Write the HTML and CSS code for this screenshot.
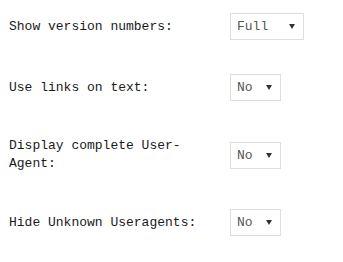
FILE: index.html
```html
<!DOCTYPE html>
<html lang="en">

<head>
  <meta charset="UTF-8" />
  <title>Settings</title>
  <link rel="stylesheet" href="styles.css">
</head>

<body>

  <form class="settings">
    <div class="row">
      <label class="label" for="versions">Show version numbers:</label>
      <div class="pick pick-wide">
        <select id="versions">
          <option>Full</option>
          <option>Short</option>
          <option>None</option>
        </select>
        <span class="arrow"></span>
      </div>
    </div>

    <div class="row">
      <label class="label" for="links">Use links on text:</label>
      <div class="pick">
        <select id="links">
          <option>No</option>
          <option>Yes</option>
        </select>
        <span class="arrow"></span>
      </div>
    </div>

    <div class="row">
      <label class="label" for="agent">Display complete User-Agent:</label>
      <div class="pick">
        <select id="agent">
          <option>No</option>
          <option>Yes</option>
        </select>
        <span class="arrow"></span>
      </div>
    </div>

    <div class="row">
      <label class="label" for="unknown">Hide Unknown Useragents:</label>
      <div class="pick">
        <select id="unknown">
          <option>No</option>
          <option>Yes</option>
        </select>
        <span class="arrow"></span>
      </div>
    </div>
  </form>

</body>

</html>
```

FILE: styles.css
```css
* {
  margin: 0;
  padding: 0;
  box-sizing: border-box;
}

body {
  background-color: #fff;
  font-family: "Liberation Mono", "DejaVu Sans Mono", monospace;
  font-size: 13px;
  color: #1a1a1a;
}

.settings {
  padding-top: 13px;
}

.row {
  display: grid;
  grid-template-columns: 230px auto;
  align-items: center;
  margin-bottom: 34px;
}

.label {
  padding: 2px 16px 2px 9px;
  line-height: 18px;
}

.pick {
  position: relative;
  width: 51px;
  height: 27px;
}

.pick-wide {
  width: 74px;
}

.pick select {
  appearance: none;
  -webkit-appearance: none;
  width: 100%;
  height: 100%;
  border: 1px solid #dedede;
  border-radius: 0;
  background-color: #fff;
  padding-left: 6px;
  font-family: "Liberation Mono", "DejaVu Sans Mono", monospace;
  font-size: 13px;
  color: #555;
  outline: none;
}

/* small dropdown triangle */
.arrow {
  position: absolute;
  right: 9px;
  top: 11px;
  width: 0;
  height: 0;
  border-left: 3px solid transparent;
  border-right: 3px solid transparent;
  border-top: 5px solid #333;
  pointer-events: none;
}
```
